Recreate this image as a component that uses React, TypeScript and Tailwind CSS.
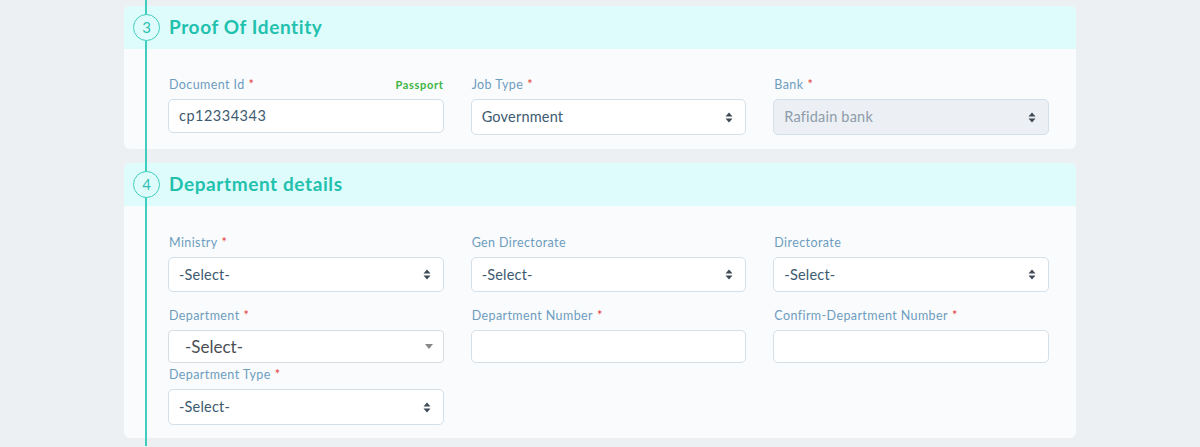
import type { ReactNode } from "react";

const font = { fontFamily: "Lato, 'Open Sans', sans-serif" };

function Label({ text, required, extra }: { text: string; required?: boolean; extra?: ReactNode }) {
  return (
    <div className="flex items-center justify-between h-[16px] mb-[6px] pl-[1px]">
      <span className="text-[12.5px] text-[#6d9dbf] tracking-[0.4px]">
        {text}
        {required && <span className="text-[#e53935] ml-[4px]">*</span>}
      </span>
      {extra}
    </div>
  );
}

function Carets() {
  return (
    <svg width="8" height="11" viewBox="0 0 8 11" className="shrink-0">
      <path d="M4 0.5 L7.5 4.5 H0.5 Z" fill="#3e4a55" />
      <path d="M4 10.5 L7.5 6.5 H0.5 Z" fill="#3e4a55" />
    </svg>
  );
}

function Select({ value, disabled, h = "h-[35px]" }: { value: string; disabled?: boolean; h?: string }) {
  return (
    <div
      className={`${h} flex items-center justify-between rounded-[5px] border border-[#d3e0ea] px-[10px] pr-[12px] ${
        disabled ? "bg-[#eceff3] text-[#8c9cab]" : "bg-white text-[#3d5a70]"
      }`}
    >
      <span className="text-[14.5px] tracking-[0.2px]">{value}</span>
      <Carets />
    </div>
  );
}

function TextInput({ value, h = "h-[34px]" }: { value?: string; h?: string }) {
  return (
    <div className={`${h} flex items-center rounded-[5px] border border-[#d3e0ea] bg-white px-[10px]`}>
      <span className="text-[14.5px] text-[#3d5a70] tracking-[0.5px]">{value}</span>
    </div>
  );
}

function Select2() {
  return (
    <div className="h-[33px] flex items-center justify-between rounded-[4px] border border-[#d6dde3] bg-white pl-[16px] pr-[10px]">
      <span className="text-[17px] text-[#4a4f55]">-Select-</span>
      <svg width="8" height="5" viewBox="0 0 8 5">
        <path d="M0 0 H8 L4 5 Z" fill="#888" />
      </svg>
    </div>
  );
}

function Card({ num, title, children }: { num: number; title: string; children: ReactNode }) {
  return (
    <div className="relative rounded-[6px] bg-[#fafbfc]">
      <div className="h-[43px] bg-[#dffcfc] rounded-t-[6px] flex items-center pl-[45px]">
        <h2 className="text-[19px] font-bold text-[#22c1ae] tracking-[0.6px]">{title}</h2>
      </div>
      <div className="absolute z-20 left-[9px] top-[8px] w-[27px] h-[27px] rounded-full border-[1.5px] border-[#3fcdbd] bg-[#dffcfc] flex items-center justify-center">
        <span className="text-[15px] text-[#2fbfb0]">{num}</span>
      </div>
      {children}
    </div>
  );
}

export default function App() {
  return (
    <div className="min-h-[447px] w-full bg-[#edf0f3]" style={font}>
      <div className="relative mx-auto w-[952px] pt-[6px] pb-[8px]">
        <div className="absolute z-10 left-[21px] top-0 bottom-0 w-[1.5px] bg-[#3fcdbd]" />

        <Card num={3} title="Proof Of Identity">
          <div className="grid grid-cols-3 gap-x-[27px] pl-[44px] pr-[27px] pt-[28px] pb-[14px]">
            <div>
              <Label
                text="Document Id"
                required
                extra={<span className="text-[11px] font-bold text-[#3cb543] tracking-[0.7px]">Passport</span>}
              />
              <TextInput value="cp12334343" />
            </div>
            <div>
              <Label text="Job Type" required />
              <Select value="Government" h="h-[36px]" />
            </div>
            <div>
              <Label text="Bank" required />
              <Select value="Rafidain bank" disabled h="h-[36px]" />
            </div>
          </div>
        </Card>

        <div className="h-[14px]" />

        <Card num={4} title="Department details">
          <div className="grid grid-cols-3 gap-x-[27px] pl-[44px] pr-[27px] pt-[29px] pb-[13px]">
            <div>
              <Label text="Ministry" required />
              <Select value="-Select-" />
            </div>
            <div>
              <Label text="Gen Directorate" />
              <Select value="-Select-" />
            </div>
            <div>
              <Label text="Directorate" />
              <Select value="-Select-" />
            </div>

            <div className="mt-[16px]">
              <Label text="Department" required />
              <Select2 />
            </div>
            <div className="mt-[16px]">
              <Label text="Department Number" required />
              <TextInput h="h-[33px]" />
            </div>
            <div className="mt-[16px]">
              <Label text="Confirm-Department Number" required />
              <TextInput h="h-[33px]" />
            </div>

            <div className="mt-[4px]">
              <Label text="Department Type" required />
              <Select value="-Select-" h="h-[36px]" />
            </div>
          </div>
        </Card>
      </div>
    </div>
  );
}
